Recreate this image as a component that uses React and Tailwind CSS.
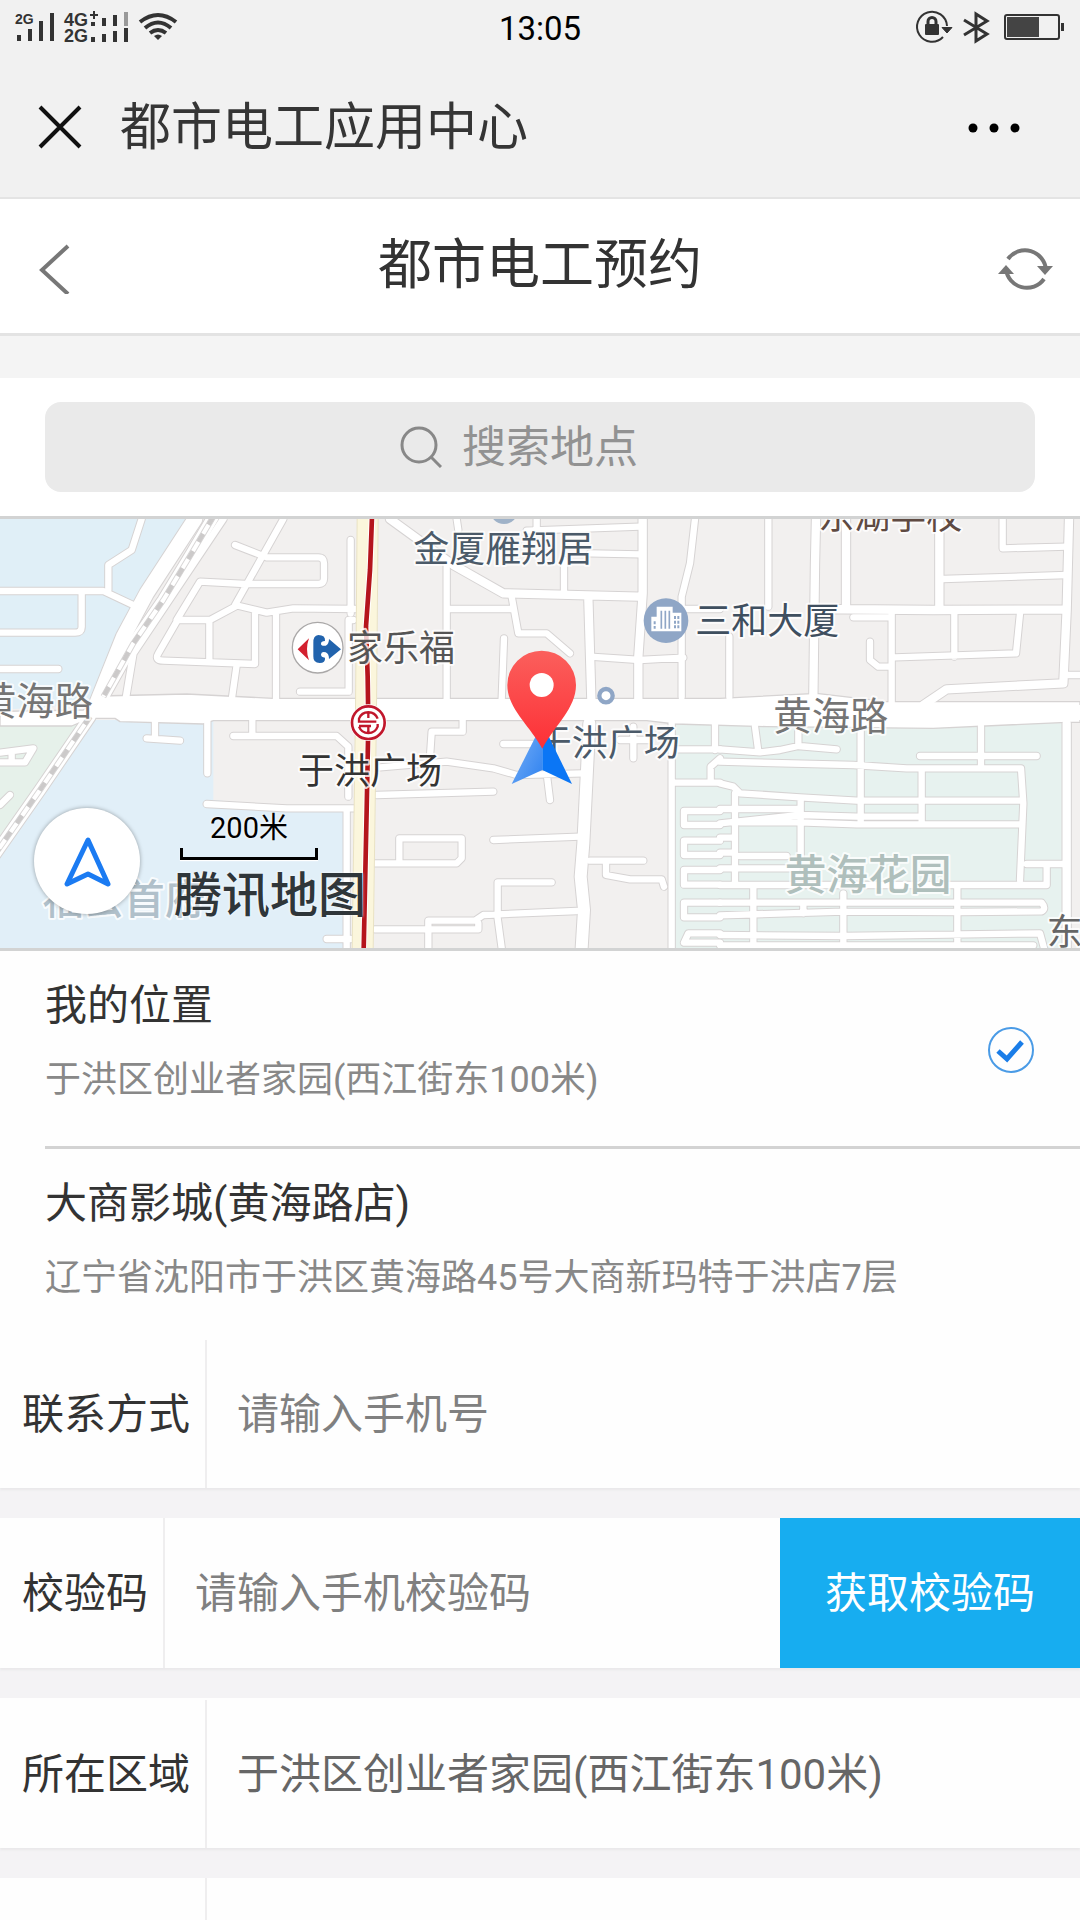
import { useState } from 'react'

const FONT = "font-['Roboto','Noto_Sans_CJK_SC',sans-serif]"

// Streets of the map, drawn twice: a grey casing and a white fill
const STREETS = [
  {
    x: 0,
    d: 'M0 243H310L410 290M325 240V165L395 120L425 27M245 245V350Q245 368 225 368H0M0 477H175M850 27L705 285M705 105L800 142H955Q972 142 972 160V205Q972 222 955 222H735L600 215L530 330H630L705 290M705 285L800 308L880 295L1070 297M628 330V450M530 335L475 430Q462 452 490 452L765 462V310M710 465L695 570M828 310V570M1052 90V310M1060 330H1046V545H900M465 630V685M440 685L540 692M622 630V790M757 630V678M700 678H1010L1045 710V860M620 882L860 895H1070M1040 900V1314M980 1287H1080M0 757H75L100 715L0 728M35 725V757M0 885L30 855',
  },
  {
    x: 1080,
    d: 'M290 27L295 60M260 150V570M265 297H455M455 260L475 370H560L630 430M432 385L425 570M612 150V245M690 130L840 133M500 62L840 50M530 27V60M1005 27L990 160L965 260V560M690 440L840 450L970 443M960 297H1080M308 630V665H215L210 740M60 772L260 755L400 775L470 795L670 790M430 702H560M50 855L400 845M560 790L570 870M400 990L660 980M118 1050V985H305V1045L290 1060H45M690 1052H850M738 1055V1095L810 1108H905L912 1130M413 1225V1117H575M413 1225L425 1314M45 1258H355V1240M205 1314V1232H345L370 1215L650 1203M935 640V1314M820 650V745M780 690H870M935 718H1080M945 818H1080M1052 810V770L1080 745M1065 640V720M1080 903H972V945H1080M1080 992H972V1035H1080M1080 1080H972V1124H1080M1080 1178H972V1222H1080M1080 1270H985L972 1298H1080',
  },
  {
    x: 2160,
    d: 'M145 27V290M848 27V115L1040 110M670 207L1040 195M400 322H515M515 310V580M703 310V440M900 310L888 430L525 442M450 395V450L475 470H510M28 380V560M1045 495H1080M105 650L115 725M0 718L120 727L180 720L235 708L350 718M235 660V708M422 650V935M600 738H950M783 650V770M0 755L400 765L560 775H903L910 880L900 1110M0 820L40 830L60 850L240 862L410 872H900M45 850V1120M605 780V935M242 870V1040M0 897H240M0 940L240 915L410 920H600M60 937L240 937L410 943H900M0 983H40M0 1028H40M60 1038H200M0 1075H230M0 1125H980V1070M920 1062H1030M0 1178H965Q980 1195 965 1204L720 1206L370 1205L0 1216M100 1130V1314M370 1150V1314M712 1125V1314M250 1178V1210M0 1275L370 1278L960 1270L972 1314M0 1306H940',
  },
]

const AVENUES =
  'M1170 27L1360 165L1510 250L1915 260M1928 27V250L1915 440V600M1765 265L1775 600M2448 27L2445 160L2440 560M2538 27V297M2818 27V297M2440 297L2800 300L3200 298M3207 27L3200 300L3190 520L2840 538L2770 585M3200 640V1314'

const BYPASS = 'M585 27L440 250L370 380L290 580'
const BOULEVARD = 'M1768 640L1750 1000L1742 1100L1752 1200L1745 1314'
const RAIL = 'M640 20L575 130L490 270L400 400L310 560M270 620L120 840L-20 1040'
const METRO = 'M1116 20L1110 180L1098 350L1103 500L1105 640L1100 900L1091 1320'

const LABELS = [
  { text: '福云首府', x: 128, y: 1213, size: 122, fill: '#b0c0ca', weight: 500 },
  { text: '黄海路', x: -66, y: 615, size: 115, fill: '#757575' },
  { text: '黄海路', x: 2320, y: 660, size: 115, fill: '#757575' },
  { text: '金厦雁翔居', x: 1240, y: 157, size: 108, fill: '#4b5a69' },
  { text: '家乐福', x: 1041, y: 453, size: 108, fill: '#555555' },
  { text: '于洪广场', x: 894, y: 822, size: 108, fill: '#333333' },
  { text: '于洪广场', x: 1607, y: 739, size: 108, fill: '#4b5a69' },
  { text: '三和大厦', x: 2086, y: 371, size: 108, fill: '#3f4f5f' },
  { text: '东湖学校', x: 2455, y: 57, size: 108, fill: '#5f4a42' },
  { text: '黄海花园', x: 2354, y: 1140, size: 125, fill: '#afbfbc', weight: 500 },
  { text: '东', x: 3140, y: 1306, size: 108, fill: '#666666' },
]

const PLACES = [
  { id: 'mine', name: '我的位置', address: '于洪区创业者家园(西江街东100米)' },
  { id: 'cinema', name: '大商影城(黄海路店)', address: '辽宁省沈阳市于洪区黄海路45号大商新玛特于洪店7层' },
]

function StatusBar() {
  return (
    <div className="flex h-14 items-center justify-between px-3 text-[#333]">
      <div className="flex flex-1">
        <svg width="170" height="56" viewBox="12 0 170 56" fill="#333" aria-hidden="true">
          <g fontFamily="Liberation Sans, sans-serif" fontWeight="700">
            <text x="15" y="24" fontSize="14">2G</text>
            <text x="64" y="26" fontSize="18">4G</text>
            <text x="64" y="42" fontSize="18">2G</text>
          </g>
          <path d="M17 35h4v6h-4zM28 29h4v12h-4zM39 21h4v20h-4zM50 13h4v28h-4z" />
          <path d="M91 22h4v4h-4zM102 18h4v8h-4zM113 15h4v11h-4zM91 37h4v5h-4zM102 34h4v8h-4zM113 31h4v11h-4zM124 28h4v14h-4z" />
          <path d="M90 14h8v2h-8zM93 11h2v8h-2z" />
          <path d="M124 12h4v14h-4z" fill="#999" />
          <g fill="none" stroke="#333" strokeWidth="4">
            <path d="M140 22Q158 8 176 22" />
            <path d="M145 28Q158 17 171 28" />
            <path d="M150 33Q158 27 166 33" />
          </g>
          <path d="M154 36Q158 33 162 36L158 40Z" />
        </svg>
      </div>
      <time className="text-[33px] leading-none text-black">13:05</time>
      <div className="flex flex-1 justify-end">
        <svg width="154" height="56" viewBox="914 0 154 56" fill="none" stroke="#333" aria-hidden="true">
          <path d="M947 26A15 15 0 1 0 943 37" strokeWidth="2" />
          <path d="M942 27.500H952L947 33Z" fill="#333" strokeWidth="1" />
          <rect x="925" y="24" width="14" height="11" rx="1" fill="#333" stroke="none" />
          <path d="M928 26V21.500a4 4 0 0 1 8 0V26" strokeWidth="3" />
          <path d="M964 20L987 34L976 41V14L987 21L964 35" strokeWidth="3" />
          <rect x="1005" y="15" width="54" height="24" rx="2" strokeWidth="2" />
          <path d="M1007 17h32v20h-32z" fill="#444" stroke="none" />
          <path d="M1061 23h3v8h-3z" fill="#333" stroke="none" />
        </svg>
      </div>
    </div>
  )
}

function AppBar() {
  return (
    <div className="flex h-[141px] items-center pr-[53px] pl-9">
      <button type="button" aria-label="关闭" className="mr-9">
        <svg width="48" height="48" viewBox="0 0 48 48" fill="none" stroke="#111" strokeWidth="4">
          <path d="M4 4L44 44M44 4L4 44" />
        </svg>
      </button>
      <span className="flex-1 pt-0.5 text-[51px] leading-none text-[#353535]">都市电工应用中心</span>
      <button type="button" aria-label="更多">
        <svg width="64" height="48" viewBox="0 0 64 48" fill="#000">
          <circle cx="10" cy="25" r="4.500" />
          <circle cx="31" cy="25" r="4.500" />
          <circle cx="52" cy="25" r="4.500" />
        </svg>
      </button>
    </div>
  )
}

function PageHeader() {
  return (
    <header className="flex h-[139px] items-center justify-between border-t-2 border-b-[3px] border-t-[#e4e4e4] border-b-[#e3e3e3] bg-white px-6">
      <button type="button" aria-label="返回" className="px-3">
        <svg width="36" height="56" viewBox="0 0 36 56" fill="none" stroke="#777" strokeWidth="4">
          <path d="M32 8L6 32L32 56" />
        </svg>
      </button>
      <h1 className="text-[54px] leading-none text-[#333]">都市电工预约</h1>
      <button type="button" aria-label="刷新">
        <svg width="60" height="56" viewBox="-30 -29 60 56" fill="none" stroke="#777" strokeWidth="4">
          <path d="M-18 -8A21 21 0 0 1 20 3" />
          <path d="M18 12A21 21 0 0 1 -20 2" />
          <path d="M11 -1H27L19 8Z" fill="#777" stroke="none" />
          <path d="M-28 7H-12L-20 -2Z" fill="#777" stroke="none" />
        </svg>
      </button>
    </header>
  )
}

function MapView() {
  return (
    <section aria-label="地图" className="relative border-y-[3px] border-[#d2d3d3]">
      <svg
        className="block h-[429px] w-full"
        viewBox="0 27 3240 1287"
        preserveAspectRatio="xMidYMid slice"
        fontFamily="'Noto Sans CJK SC', sans-serif"
      >
        <defs>
          <linearGradient id="pin" x1="0" y1="0" x2="0" y2="1">
            <stop offset="0" stopColor="#fb5f5c" />
            <stop offset="1" stopColor="#fd3036" />
          </linearGradient>
          <linearGradient id="arrow" x1="0" y1="0" x2="1" y2="1">
            <stop offset="0" stopColor="#7fb4f7" />
            <stop offset="1" stopColor="#2f82f0" />
          </linearGradient>
        </defs>

        <rect y="27" width="3240" height="1287" fill="#f2f0ef" />
        <path d="M0 27H600L440 250L300 580L0 600Z" fill="#e0eff7" />
        <path d="M270 630H640V870L1040 905V1314H0V1010Z" fill="#e1eff8" />
        <path d="M0 640H250L0 1010Z" fill="#e6f1ea" />
        <path d="M2020 640H3185V1314H2020Z" fill="#e7f2ef" />

        <g fill="none" strokeLinecap="round" strokeLinejoin="round">
          <g stroke="#d6d3d3">
            <path d={BYPASS} strokeWidth="50" />
            <path d="M670 27L400 430L375 580" strokeWidth="26" />
            <path d={RAIL} strokeWidth="40" />
            {STREETS.map((s) => (
              <path key={s.x} d={s.d} transform={`translate(${s.x} 0)`} strokeWidth="25" />
            ))}
            <path d={AVENUES} strokeWidth="31" />
            <path d={BOULEVARD} strokeWidth="42" />
          </g>
          <path
            d="M0 604L250 600L300 558L560 552L820 565H2160L2450 550L2660 575H3240V637H3200L2800 655L2300 650L2024 642L1940 632H640L610 642L360 635L345 625H270L215 648H0Z"
            fill="#fff"
            stroke="#d6d3d3"
            strokeWidth="4"
          />
          <g stroke="#fff">
            <path d={BYPASS} strokeWidth="44" />
            <path d="M670 27L400 430L375 580" strokeWidth="20" />
            <path d={RAIL} strokeWidth="34" />
            {STREETS.map((s) => (
              <path key={s.x} d={s.d} transform={`translate(${s.x} 0)`} strokeWidth="19" />
            ))}
            <path d={AVENUES} strokeWidth="25" />
            <path d={BOULEVARD} strokeWidth="36" />
          </g>
          <path d={RAIL} stroke="#d9d7d7" strokeWidth="18" strokeLinecap="butt" />
          <path d={RAIL} stroke="#fff" strokeWidth="12" strokeLinecap="butt" />
          <path d={RAIL} stroke="#cccaca" strokeWidth="14" strokeLinecap="butt" strokeDasharray="28 32" />
        </g>
        <path d="M300 565L900 572L3240 585V630L640 625L280 618Z" fill="#fff" />

        {/* Metro line */}
        <g fill="none">
          <path d="M1103 20L1098 600L1088 1320" stroke="#e9e2c4" strokeWidth="66" />
          <path d="M1103 20L1098 600L1088 1320" stroke="#fbf6dc" strokeWidth="60" />
          <path d={METRO} stroke="#fff" strokeWidth="20" />
          <path d={METRO} stroke="#b5151c" strokeWidth="14" />
        </g>

        {LABELS.map((l) => (
          <text
            key={`${l.text}-${l.x}`}
            x={l.x}
            y={l.y}
            fontSize={l.size}
            fontWeight={l.weight || 400}
            fill={l.fill}
            stroke="#fff"
            strokeOpacity="0.8"
            strokeWidth="12"
            strokeLinejoin="round"
            paintOrder="stroke"
          >
            {l.text}
          </text>
        ))}

        {/* Metro station */}
        <g transform="translate(1105 638)" fill="none" stroke="#c1172c">
          <circle r="55" fill="#fff" stroke="none" />
          <circle r="49" strokeWidth="8" />
          <path d="M28 -12A30 30 0 0 0 -28 -12V-3H24M-28 12A30 30 0 0 0 28 12V4M0 -30V-14M0 8V30M-28 10H8" strokeWidth="7" />
        </g>

        {/* Carrefour */}
        <g transform="translate(953 413)">
          <circle r="76" fill="#fff" stroke="#aaa8a8" strokeWidth="4" />
          <path d="M-60 5L-26 -28Q-38 5 -26 38Z" fill="#d3202f" />
          <path
            d="M22 -20Q24 -38 2 -38Q-14 -36 -13 -14V26Q-14 46 6 46Q24 46 22 30Q10 30 10 20Q12 10 24 14Q34 18 34 34L70 5L34 -26Q34 -10 24 -6Q10 -4 10 -12Q10 -20 22 -20Z"
            fill="#2163ad"
          />
        </g>

        {/* Points of interest */}
        <circle cx="1512" cy="0" r="42" fill="#9fb2c8" />
        <g transform="translate(1998 332)">
          <circle r="67" fill="#8fa6c6" />
          <path d="M-44 -12H-28V-42H20V-24H46V32H-44Z" fill="#fff" />
          <path d="M-14 -30V24M-2 -30V24M10 -30V24" stroke="#8fa6c6" strokeWidth="5" />
          <path d="M-34 2V24M27 -14V24M37 -14V24" stroke="#8fa6c6" strokeWidth="6" strokeDasharray="9 5" />
        </g>
        <circle cx="1818" cy="557" r="20" fill="#fff" stroke="#8fa6c6" strokeWidth="13" />

        {/* Current position */}
        <path d="M1627 640L1535 822L1627 780Z" fill="url(#arrow)" />
        <path d="M1627 640L1716 822L1627 780Z" fill="#0b76f5" />
        <path d="M1522 525A103 103 0 0 1 1728 525C1728 595 1665 645 1627 716C1588 645 1522 595 1522 525Z" fill="url(#pin)" />
        <circle cx="1625" cy="525" r="36" fill="#fff" />
      </svg>

      <button
        type="button"
        aria-label="定位"
        className="absolute bottom-[34px] left-[34px] flex size-[106px] items-center justify-center rounded-full bg-white shadow-[0_0_4px_rgba(0,0,0,0.35)]"
      >
        <svg width="48" height="54" viewBox="0 0 48 54" fill="none" stroke="#1b7bf2" strokeWidth="5" strokeLinejoin="round">
          <path d="M25 6L45 50L25 40L4 50Z" />
        </svg>
      </button>
      <div className="absolute bottom-6 left-[174px] text-black">
        <div className="ml-1.5 w-[138px]">
          <p className="text-center text-[29px] leading-10 [text-shadow:0_0_3px_#fff]">200米</p>
          <div className="h-3 border-x-[3px] border-b-[3px] border-black shadow-[0_1px_1px_#fff]" />
        </div>
        <p className="mt-2 text-[48px] leading-[56px] font-medium text-[#2f363a] [text-shadow:0_0_3px_#fff]">腾讯地图</p>
      </div>
    </section>
  )
}

function Place({ place, selected, onSelect }) {
  return (
    <label className="flex items-center border-b-[3px] border-[#d3d3d3] pt-7 pr-[46px] pb-[26px] last:border-b-0 last:pb-5">
      <span className="flex-1">
        <span className="block text-[42px] leading-[54px] text-[#333]">{place.name}</span>
        <span className="mt-6 mb-4 block text-[36px] leading-[47px] text-[#888]">{place.address}</span>
      </span>
      <input type="radio" name="place" className="sr-only" checked={selected} onChange={onSelect} />
      {selected && (
        <svg width="48" height="48" viewBox="0 0 48 48" fill="none" stroke="#1a7de8">
          <circle cx="25" cy="24" r="22" stroke="#4a9be6" strokeWidth="2" />
          <path d="M12 25L21 33L36 16" strokeWidth="5" />
        </svg>
      )}
    </label>
  )
}

function Field({ id, label, children }) {
  return (
    <div className="flex h-[150px] items-stretch bg-[#fefefe] pt-0.5 shadow-[0_2px_2px_#e9e8ea] has-[button]:pt-0">
      <label htmlFor={id} className="flex min-w-[163px] items-center border-r-2 border-[#efeeef] pr-[15px] pl-[22px] text-[#333]">
        {label}
      </label>
      {children}
    </div>
  )
}

const INPUT = 'min-w-0 flex-1 bg-transparent px-[30px] text-[#666] outline-none placeholder:text-[#808080]'

export default function App() {
  const [place, setPlace] = useState('mine')
  const [area, setArea] = useState('于洪区创业者家园(西江街东100米)')

  return (
    <div className={`h-screen overflow-hidden bg-[#f4f3f5] ${FONT}`}>
      <div className="bg-[#f1f1f1]">
        <StatusBar />
        <AppBar />
      </div>
      <PageHeader />
      <div className="h-[42px] bg-[#f4f4f4]" />

      <main>
        <div className="bg-white px-[45px] py-6">
          <label className="flex h-[90px] items-center justify-center gap-5 rounded-2xl bg-[#eaeaea]">
            <svg width="42" height="42" viewBox="0 0 42 42" fill="none" stroke="#888" strokeWidth="3">
              <circle cx="19" cy="19" r="17" />
              <path d="M31 31L41 41" />
            </svg>
            <input
              type="search"
              placeholder="搜索地点"
              aria-label="搜索地点"
              className="w-[218px] bg-transparent pt-0.5 text-[44px] leading-[60px] text-[#333] outline-none placeholder:text-[#929292]"
            />
          </label>
        </div>

        <MapView />

        <div className="bg-[#fefefe] pl-[45px]">
          {PLACES.map((p) => (
            <Place key={p.id} place={p} selected={place === p.id} onSelect={() => setPlace(p.id)} />
          ))}
        </div>

        <form className="space-y-[30px] text-[42px]" onSubmit={(e) => e.preventDefault()}>
          <Field id="phone" label="联系方式">
            <input id="phone" type="tel" placeholder="请输入手机号" className={INPUT} />
          </Field>
          <Field id="code" label="校验码">
            <input id="code" type="text" placeholder="请输入手机校验码" className={INPUT} />
            <button type="button" className="bg-[#17adf0] px-[45px] text-white">
              获取校验码
            </button>
          </Field>
          <Field id="area" label="所在区域">
            <input id="area" type="text" value={area} onChange={(e) => setArea(e.target.value)} className={INPUT} />
          </Field>
          <div className="flex h-[150px] bg-[#fefefe]">
            <div className="w-[207px] border-r-2 border-[#efeeef]" />
          </div>
        </form>
      </main>
    </div>
  )
}
